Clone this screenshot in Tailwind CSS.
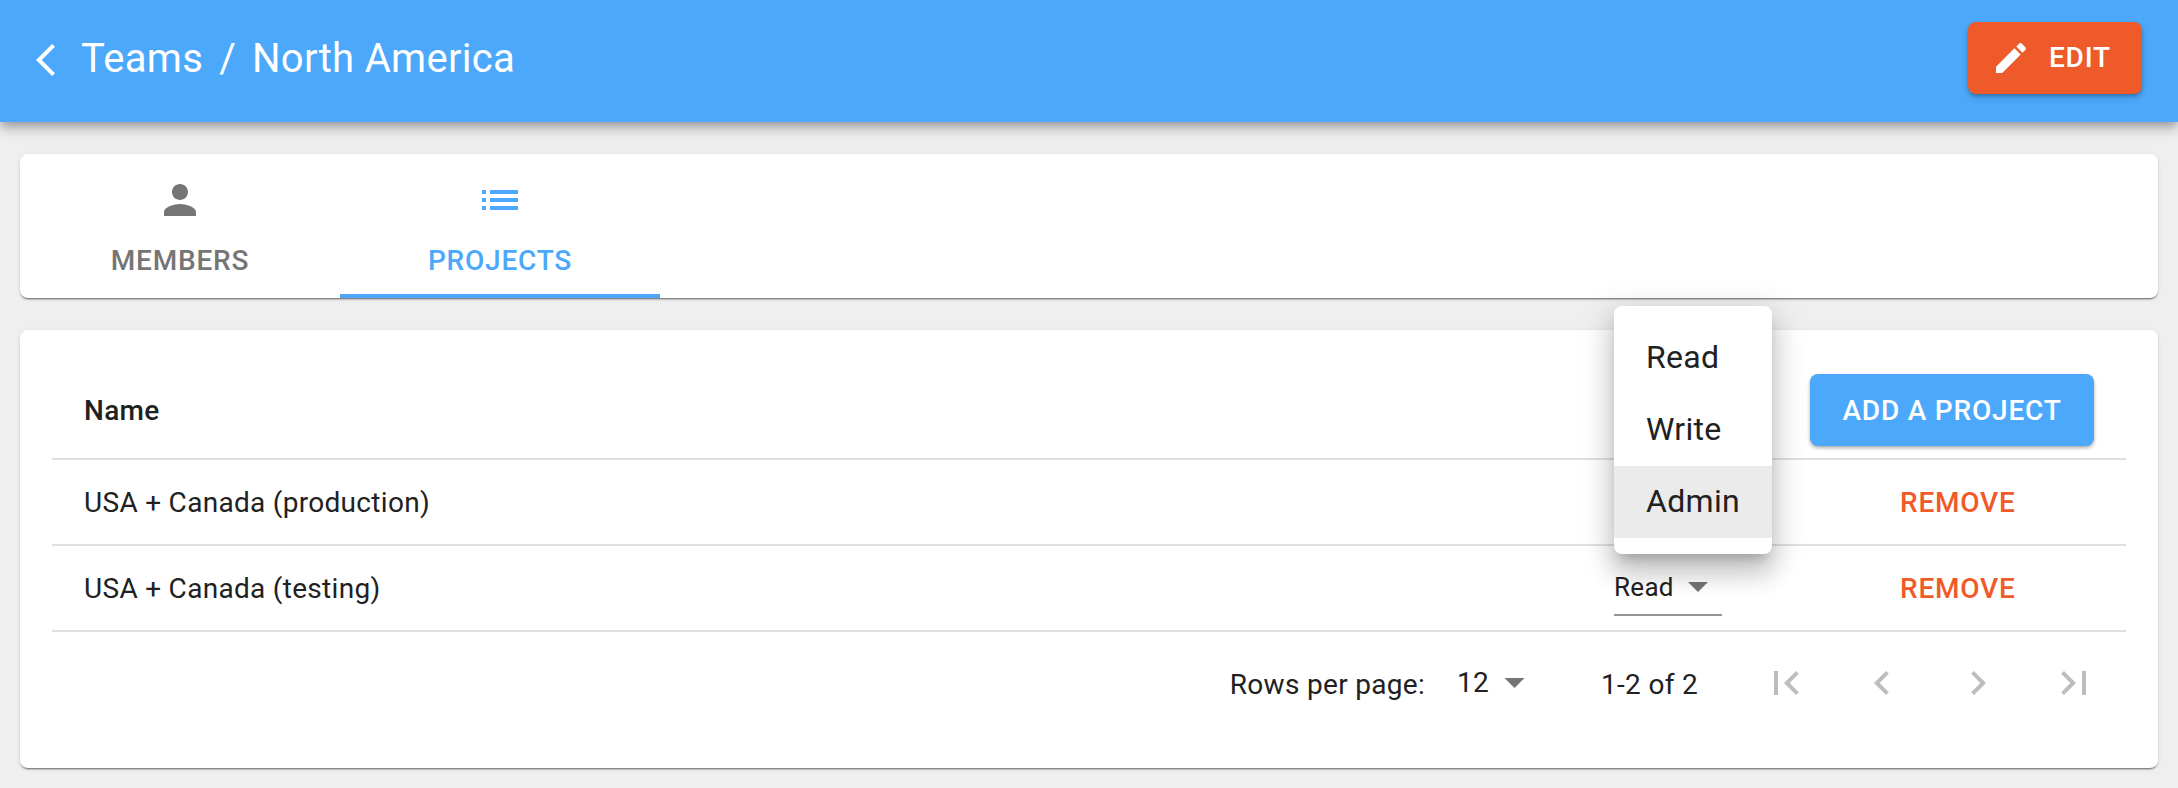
<!DOCTYPE html>
<html lang="en">
<head>
  <meta charset="UTF-8" />
  <title>Teams / North America</title>
  <script src="https://cdn.jsdelivr.net/npm/@tailwindcss/browser@4"></script>
</head>
<body class="h-[788px] overflow-hidden bg-[#efefef] text-[#212121] text-[28px] tracking-[0.3px] font-[family-name:Roboto,sans-serif]">
  <!-- top bar -->
  <header class="relative z-10 h-[122px] bg-[#4ca8fb] flex items-center justify-between pl-[36px] pr-[36px] shadow-[0_4px_8px_-2px_rgba(0,0,0,0.2),0_8px_10px_0_rgba(0,0,0,0.14),0_2px_20px_0_rgba(0,0,0,0.12)]">
    <div class="flex items-center text-white text-[40px] leading-[48px] pb-[4px]">
      <svg class="w-[19px] h-[32px] mr-[26px] mt-[2px]" viewBox="0 2.1 11.67 19.8" preserveAspectRatio="none" fill="#ffffff"><path d="M11.67 3.87L9.9 2.1 0 12l9.9 9.9 1.77-1.77L3.54 12z"/></svg>
      <span>Teams</span>
      <span class="mx-[16px]">/</span>
      <span>North America</span>
    </div>
    <button class="mb-[6px] h-[72px] w-[174px] rounded-[8px] bg-[#ee5a2a] text-white font-medium tracking-[0.8px] flex items-center pl-[23px] shadow-[0_2px_4px_-1px_rgba(0,0,0,0.3),0_4px_6px_0_rgba(0,0,0,0.14)]">
      <svg class="w-[40px] h-[40px] mr-[18px]" viewBox="0 0 24 24" fill="#ffffff"><path d="M3 17.25V21h3.75L17.81 9.94l-3.75-3.75L3 17.25zM20.71 7.04c.39-.39.39-1.02 0-1.41l-2.34-2.34c-.39-.39-1.02-.39-1.41 0l-1.83 1.83 3.75 3.75 1.83-1.83z"/></svg>
      EDIT
    </button>
  </header>

  <main class="px-[20px] pt-[32px]">
    <!-- tabs -->
    <nav class="h-[144px] bg-white rounded-[8px] flex overflow-hidden shadow-[0_2px_2px_-1px_rgba(0,0,0,0.55),0_1px_4px_0_rgba(0,0,0,0.1)]">
      <div class="w-[320px] flex flex-col items-center pt-[22px] text-[#757575] font-medium tracking-[0.8px]">
        <svg class="w-[48px] h-[48px]" viewBox="0 0 24 24" fill="#757575"><path d="M12 12c2.21 0 4-1.79 4-4s-1.79-4-4-4-4 1.79-4 4 1.79 4 4 4zm0 2c-2.67 0-8 1.34-8 4v2h16v-2c0-2.66-5.33-4-8-4z"/></svg>
        <span class="mt-[21px] leading-[32px]">MEMBERS</span>
      </div>
      <div class="w-[320px] flex flex-col items-center pt-[22px] text-[#4ca8fb] font-medium tracking-[0.8px] border-b-4 border-[#4ca8fb]">
        <svg class="w-[48px] h-[48px]" viewBox="0 0 24 24" fill="#4ca8fb"><path d="M3 13h2v-2H3v2zm0 4h2v-2H3v2zm0-8h2V7H3v2zm4 4h14v-2H7v2zm0 4h14v-2H7v2zM7 7v2h14V7H7z"/></svg>
        <span class="mt-[21px] leading-[32px]">PROJECTS</span>
      </div>
    </nav>

    <!-- projects table -->
    <section class="relative mt-[32px] h-[438px] bg-white rounded-[8px] px-[32px] pt-[32px] shadow-[0_2px_2px_-1px_rgba(0,0,0,0.55),0_1px_4px_0_rgba(0,0,0,0.1)]">
      <div class="h-[98px] flex items-center border-b-2 border-[#e0e0e0] pl-[32px]">
        <div class="flex-1 font-medium pt-[2px]">Name</div>
        <div class="w-[316px]">
          <button class="h-[72px] w-[284px] pt-[2px] rounded-[8px] bg-[#4ca8fb] text-white font-medium tracking-[0.8px] shadow-[0_2px_4px_-1px_rgba(0,0,0,0.3),0_2px_4px_0_rgba(0,0,0,0.14)]">ADD A PROJECT</button>
        </div>
      </div>
      <div class="h-[86px] flex items-center border-b-2 border-[#e0e0e0] pl-[32px]">
        <div class="flex-1 pt-[2px]">USA + Canada (production)</div>
        <div class="w-[316px] pl-[90px] pt-[2px] text-[#f05a28] font-medium tracking-[0.8px]">REMOVE</div>
      </div>
      <div class="h-[86px] flex items-center border-b-2 border-[#e0e0e0] pl-[32px]">
        <div class="flex-1 pt-[2px]">USA + Canada (testing)</div>
        <div class="w-[196px]">
          <div class="w-[108px] h-[56px] flex items-center border-b-2 border-[#949494]">
            <span class="text-[26px]">Read</span>
            <svg class="w-[20px] h-[10px] ml-[14px]" viewBox="0 0 20 10" fill="#757575"><path d="M0 0h20L10 10z"/></svg>
          </div>
        </div>
        <div class="w-[316px] pl-[90px] pt-[2px] text-[#f05a28] font-medium tracking-[0.8px]">REMOVE</div>
      </div>

      <!-- pagination -->
      <div class="flex items-center justify-end pt-[27px] pr-[28px]">
        <span class="pt-[3px]">Rows per page:</span>
        <span class="ml-[32px] leading-[32px]">12</span>
        <svg class="w-[21px] h-[10px] ml-[15px] mr-[76px]" viewBox="0 0 20 10" fill="#757575"><path d="M0 0h20L10 10z"/></svg>
        <span class="mr-[64px] pt-[3px]">1-2 of 2</span>
        <div class="flex gap-[48px]">
          <svg class="w-[48px] h-[48px]" viewBox="0 0 24 24" fill="#bdbdbd"><path d="M18.41 16.59L13.82 12l4.59-4.59L17 6l-6 6 6 6zM6 6h2v12H6z"/></svg>
          <svg class="w-[48px] h-[48px]" viewBox="0 0 24 24" fill="#bdbdbd"><path d="M15.41 7.41L14 6l-6 6 6 6 1.41-1.41L10.83 12z"/></svg>
          <svg class="w-[48px] h-[48px]" viewBox="0 0 24 24" fill="#bdbdbd"><path d="M10 6L8.59 7.41 13.17 12l-4.58 4.59L10 18l6-6z"/></svg>
          <svg class="w-[48px] h-[48px]" viewBox="0 0 24 24" fill="#bdbdbd"><path d="M5.59 7.41L10.18 12l-4.59 4.59L7 18l6-6-6-6zM16 6h2v12h-2z"/></svg>
        </div>
      </div>
    </section>
  </main>

  <!-- open role menu -->
  <ul class="absolute z-20 left-[1614px] top-[306px] w-[158px] py-[16px] bg-white rounded-[8px] text-[32px] shadow-[0_10px_12px_-6px_rgba(0,0,0,0.2),0_20px_24px_2px_rgba(0,0,0,0.14),0_8px_32px_6px_rgba(0,0,0,0.12)]">
    <li class="h-[72px] flex items-center pl-[32px] pb-[2px]">Read</li>
    <li class="h-[72px] flex items-center pl-[32px] pb-[2px]">Write</li>
    <li class="h-[72px] flex items-center pl-[32px] pb-[2px] bg-[#ebebeb]">Admin</li>
  </ul>
</body>
</html>
